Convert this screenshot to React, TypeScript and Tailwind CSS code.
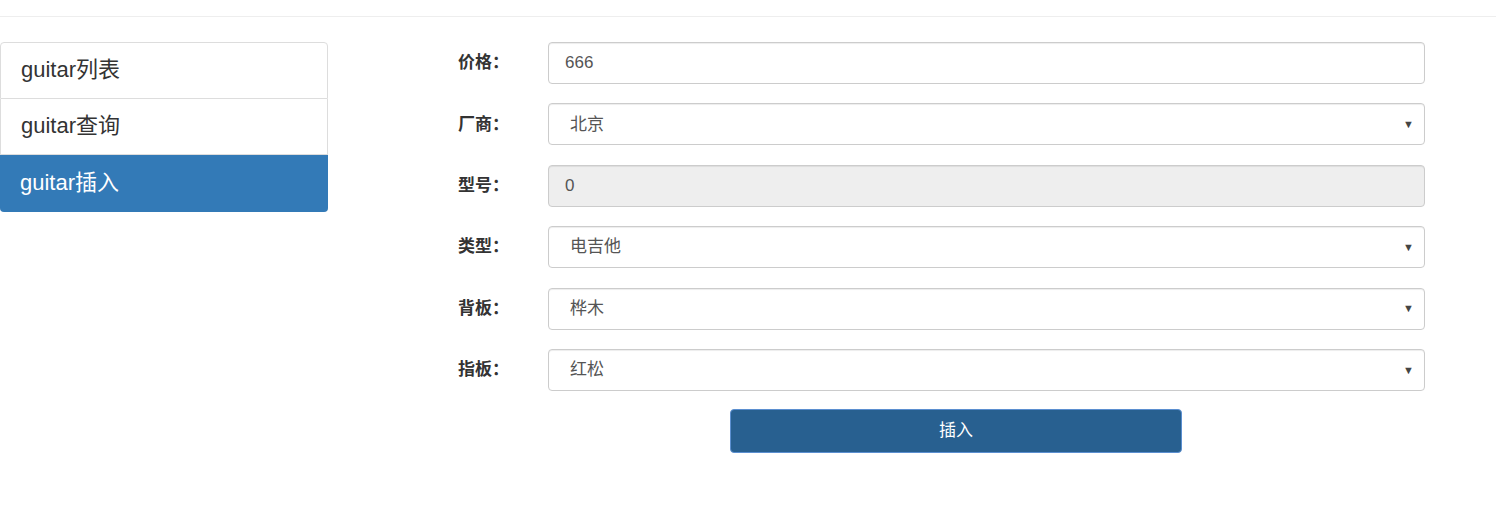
import React from "react";

const font = { fontFamily: '"Liberation Sans", "Noto Sans CJK SC", sans-serif' };

const navItems = [
  { label: "guitar列表", cls: "h-[57px] rounded-t-[4px] border border-[#ddd] bg-white text-[#333]" },
  { label: "guitar查询", cls: "h-[56px] border-x border-b border-[#ddd] bg-white text-[#333]" },
  { label: "guitar插入", cls: "h-[57px] rounded-b-[4px] bg-[#337ab7] text-white" },
];

type Field = { label: string; value: string; kind: "text" | "select" | "disabled" };

const fields: Field[] = [
  { label: "价格：", value: "666", kind: "text" },
  { label: "厂商：", value: "北京", kind: "select" },
  { label: "型号：", value: "0", kind: "disabled" },
  { label: "类型：", value: "电吉他", kind: "select" },
  { label: "背板：", value: "桦木", kind: "select" },
  { label: "指板：", value: "红松", kind: "select" },
];

function FieldBox({ f }: { f: Field }) {
  const base =
    "w-[877px] h-[42px] border border-[#ccc] rounded-[4px] shadow-[inset_0_1px_1px_rgba(0,0,0,0.075)] flex items-center text-[17px] text-[#555]";
  if (f.kind === "select") {
    return (
      <div className={base + " bg-white pl-[21px] pr-[10px] justify-between"}>
        <span>{f.value}</span>
        <span className="text-[11px] text-[#444]">▼</span>
      </div>
    );
  }
  return (
    <div className={base + (f.kind === "disabled" ? " bg-[#eee]" : " bg-white") + " px-[16px]"}>
      {f.value}
    </div>
  );
}

export default function App() {
  return (
    <div className="w-[1496px] h-[507px] bg-white text-[#333]" style={font}>
      <div className="h-[17px] border-b border-[#eee]" />
      <div className="flex pt-[25px]">
        <div className="w-[328px] self-start">
          {navItems.map((item) => (
            <div key={item.label} className={"px-[20px] pb-[3px] text-[22px] flex items-center " + item.cls}>
              {item.label}
            </div>
          ))}
        </div>
        <div className="flex flex-col">
          <div className="flex flex-col gap-[19.4px]">
            {fields.map((f) => (
              <div key={f.label} className="flex items-center">
                <div className="w-[181px] text-right text-[17px] font-bold">{f.label}</div>
                <div className="ml-[39px]">
                  <FieldBox f={f} />
                </div>
              </div>
            ))}
          </div>
          <div className="mt-[18px] ml-[402px] w-[452px] h-[44px] rounded-[4px] bg-[#286090] border border-[#5b8fd0] text-white text-[17px] flex items-center justify-center">
            插入
          </div>
        </div>
      </div>
    </div>
  );
}
